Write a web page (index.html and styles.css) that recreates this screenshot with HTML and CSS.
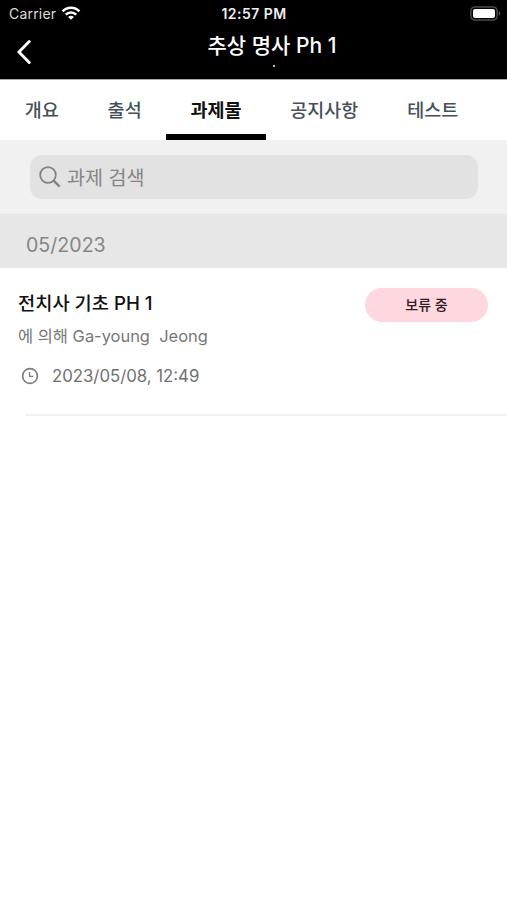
FILE: index.html
```html
<!DOCTYPE html>
<html lang="ko">
<head>
<meta charset="utf-8">
<meta name="viewport" content="width=device-width, initial-scale=1">
<title>과제물</title>
<link rel="stylesheet" href="styles.css">
</head>
<body>
<header class="header">
  <div class="status">
    <div class="carrier">
      <span>Carrier</span>
      <svg class="wifi" width="20" height="14" viewBox="0 0 20 14" fill="none" stroke="#fff" stroke-width="2.5">
        <path d="M1.6 5.3C6.2.5 13.8.5 18.4 5.3"/>
        <path d="M4.7 8.6C7.6 5.7 12.4 5.7 15.3 8.6"/>
        <path d="M10 13.7L7.1 10.9Q10 8.5 12.9 10.9Z" fill="#fff" stroke="none"/>
      </svg>
    </div>
    <span class="time">12:57 PM</span>
    <svg class="battery" width="31" height="15" viewBox="0 0 31 15">
      <rect x=".9" y=".9" width="26.2" height="13.2" rx="4" fill="#000" stroke="#4b4b4b" stroke-width="1.5"/>
      <rect x="3" y="3" width="22" height="9" rx="2" fill="#fff"/>
      <path d="M28.7 5.2Q30.3 5.8 30.3 7.5T28.7 9.8Z" fill="#555"/>
    </svg>
  </div>
  <div class="nav">
    <svg class="back" width="16" height="26" viewBox="0 0 16 26" fill="none" stroke="#fff" stroke-width="2.9" stroke-linecap="round" stroke-linejoin="miter">
      <path d="M14.2 2.6L4 13L14.2 23.4"/>
    </svg>
    <div class="heading">
      <h1 class="title">추상 명사 Ph 1</h1>
      <i class="dot"></i>
    </div>
  </div>
</header>
<nav class="tabs">
  <a class="tab">개요</a>
  <a class="tab">출석</a>
  <a class="tab active">과제물</a>
  <a class="tab">공지사항</a>
  <a class="tab">테스트</a>
</nav>
<div class="search-area">
  <div class="search">
    <svg width="22" height="22" viewBox="0 0 22 22" fill="none" stroke="#828284">
      <circle cx="9" cy="9" r="7.8" stroke-width="1.8"/>
      <path d="M14.6 14.6L20.6 20.6" stroke-width="2.3"/>
    </svg>
    <span class="placeholder">과제 검색</span>
  </div>
</div>
<h2 class="month">05/2023</h2>
<main class="assignment">
  <div class="details">
    <h3 class="name">전치사 기초 PH 1</h3>
    <p class="author">에 의해 Ga-young  Jeong</p>
    <div class="due">
      <svg width="18" height="18" viewBox="0 0 18 18" fill="none" stroke="#7d7d7d" stroke-width="1.7">
        <circle cx="9" cy="9" r="7.4"/>
        <path d="M8.6 5V9.4H12.3" stroke-width="1.4"/>
      </svg>
      <span class="date">2023/05/08, 12:49</span>
    </div>
  </div>
  <span class="badge">보류 중</span>
</main>
<hr class="divider">
</body>
</html>
```
FILE: styles.css
```css
* { box-sizing: border-box; margin: 0; padding: 0; }
body {
  width: 507px;
  min-height: 900px;
  background: #fff;
  font-family: Inter, "Noto Sans CJK KR", sans-serif;
  font-weight: 400;
}
svg { display: block; flex: none; }
h1, h2, h3 { font-weight: inherit; }
.header { height: 79px; background: #000; color: #fff; }
.status {
  display: grid;
  grid-template-columns: 1fr auto 1fr;
  align-items: center;
  height: 28px;
  padding: 0 6px 0 9px;
  line-height: 28px;
}
.carrier { display: flex; align-items: center; gap: 5px; font-size: 14px; color: #ddd; letter-spacing: .2px; }
.wifi { margin-top: -3px; }
.time { font-size: 14px; font-weight: 600; color: #eee; letter-spacing: .45px; margin-left: -2px; }
.battery { justify-self: end; margin-top: -2px; }
.nav { display: grid; grid-template-columns: 40px 1fr 3px; height: 51px; }
.back { margin: 11px 0 0 15px; }
.heading { display: flex; flex-direction: column; align-items: center; }
.title { height: 35px; line-height: 36px; font-size: 21px; font-weight: 500; white-space: nowrap; }
.dot { width: 2px; height: 2px; margin: 2px 0 0 3px; background: #bbb; }
.tabs { display: flex; height: 61px; border-top: 1px solid #aaa; padding-left: .4px; }
.tab {
  height: 60px;
  padding: 0 24.4px;
  font-size: 18.5px;
  font-weight: 500;
  line-height: 61px;
  color: #46505a;
  white-space: nowrap;
}
.tab.active { color: #111; font-weight: 700; border-bottom: 6px solid #000; }
.search-area { height: 74px; padding: 15px 29px 0 30px; background: #f1f1f1; }
.search {
  display: flex;
  align-items: center;
  gap: 6px;
  height: 44px;
  padding-left: 9px;
  border-radius: 12px;
  background: #e2e2e2;
}
.placeholder { font-size: 19.6px; line-height: 44px; padding-top: 2px; color: #858587; }
.month { height: 54px; padding: 4px 0 0 26px; background: #e7e7e7; color: #858585; font-size: 19.6px; line-height: 54px; }
.assignment { display: flex; justify-content: space-between; height: 146px; padding: 20px 19px 0 18px; }
.name { height: 32px; line-height: 32px; font-size: 18.7px; font-weight: 500; color: #111; }
.author { height: 32px; line-height: 32px; font-size: 16.45px; color: #777; white-space: pre; }
.due { display: flex; align-items: center; gap: 13px; height: 32px; margin: 8px 0 0 3px; color: #707070; }
.date { font-size: 16.75px; line-height: 32px; }
.badge {
  width: 123px;
  height: 34px;
  border-radius: 17px;
  background: #ffd7de;
  color: #2c2024;
  font-size: 14px;
  font-weight: 500;
  line-height: 34px;
  text-align: center;
}
.divider { height: 2px; margin-left: 25px; border: 0; background: #f1f1f1; }
```
